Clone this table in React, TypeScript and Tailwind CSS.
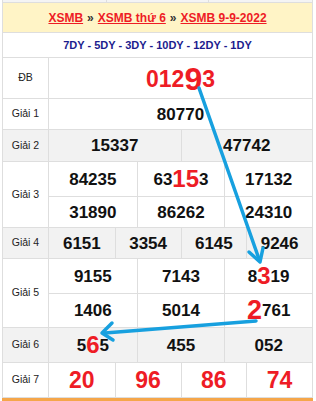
import React from 'react';

const RED = 'text-[#ee1c25]';

function Num({ children }: { children: React.ReactNode }) {
  return (
    <div className="flex items-center justify-center text-[17px] font-bold text-[#111] leading-none">
      {children}
    </div>
  );
}

function Big({ children, size = 'text-[24px]' }: { children: React.ReactNode; size?: string }) {
  return <span className={`${RED} ${size} font-bold leading-none`}>{children}</span>;
}

function Label({ children }: { children: React.ReactNode }) {
  return (
    <div className="w-[46px] shrink-0 border-r border-[#dedede] flex items-center justify-center text-[10.5px] text-[#222]">
      {children}
    </div>
  );
}

function Row({
  label,
  gray,
  h,
  children,
}: {
  label: string;
  gray?: boolean;
  h: string;
  children: React.ReactNode;
}) {
  return (
    <div className={`flex ${h} border-b border-[#dedede] ${gray ? 'bg-[#f2f2f2]' : 'bg-white'}`}>
      <Label>{label}</Label>
      <div className="flex-1 flex flex-col">{children}</div>
    </div>
  );
}

function Cells({ cols, items, h, last }: { cols: string; items: React.ReactNode[]; h: string; last?: boolean }) {
  return (
    <div className={`grid ${cols} ${h} ${last ? '' : 'border-b border-[#dedede]'}`}>
      {items.map((it, i) => (
        <div key={i} className={`flex items-center justify-center ${i > 0 ? 'border-l border-[#dedede]' : ''}`}>
          {it}
        </div>
      ))}
    </div>
  );
}

export default function App() {
  return (
    <div className="relative w-[316px] h-[401px] bg-white overflow-hidden" style={{ fontFamily: '"Liberation Sans", Arial, sans-serif' }}>
      <div className="ml-[2px] w-[311px] border-l border-r border-[#dedede]">
        {/* tail of previous table */}
        <div className="flex h-[3px] border-b border-[#dedede] bg-[#f4f4f4]">
          <div className="w-[104px] border-r border-[#dedede]" />
          <div className="w-[102px] border-r border-[#dedede]" />
          <div className="flex-1" />
        </div>

        <div className="h-[30px] border-b border-[#dedede] bg-[#fff4c6] flex items-center justify-center text-[12px] font-bold">
          <a className="text-[#ee1c25] underline">XSMB</a>
          <span className="mx-[4px] text-[#333]">»</span>
          <a className="text-[#ee1c25] underline">XSMB thứ 6</a>
          <span className="mx-[4px] text-[#333]">»</span>
          <a className="text-[#ee1c25] underline">XSMB 9-9-2022</a>
        </div>

        <div className="h-[25px] border-b border-[#dedede] bg-white flex items-center justify-center text-[11px] font-bold text-[#1c1c8e]">
          7DY - 5DY - 3DY - 10DY - 12DY - 1DY
        </div>

        <Row label="ĐB" h="h-[41px]">
          <div className="flex-1 flex items-center justify-center pt-[2px]">
            <span className={`${RED} text-[23px] font-bold leading-none`}>012</span>
            <Big size="text-[32px]">9</Big>
            <span className={`${RED} text-[23px] font-bold leading-none`}>3</span>
          </div>
        </Row>

        <Row label="Giải 1" h="h-[31px]">
          <div className="flex-1 flex items-center justify-center">
            <Num>80770</Num>
          </div>
        </Row>

        <Row label="Giải 2" gray h="h-[32px]">
          <Cells cols="grid-cols-2" h="h-full" last items={[<Num>15337</Num>, <Num>47742</Num>]} />
        </Row>

        <Row label="Giải 3" h="h-[66px]">
          <Cells
            cols="grid-cols-3"
            h="h-[35px]"
            items={[
              <Num>84235</Num>,
              <Num>
                63<Big>15</Big>3
              </Num>,
              <Num>17132</Num>,
            ]}
          />
          <Cells cols="grid-cols-3" h="flex-1" last items={[<Num>31890</Num>, <Num>86262</Num>, <Num>24310</Num>]} />
        </Row>

        <Row label="Giải 4" gray h="h-[31px]">
          <Cells
            cols="grid-cols-4"
            h="h-full"
            last
            items={[<Num>6151</Num>, <Num>3354</Num>, <Num>6145</Num>, <Num>9246</Num>]}
          />
        </Row>

        <Row label="Giải 5" h="h-[69px]">
          <Cells
            cols="grid-cols-3"
            h="h-[35px]"
            items={[
              <Num>9155</Num>,
              <Num>7143</Num>,
              <Num>
                8<Big>3</Big>19
              </Num>,
            ]}
          />
          <Cells
            cols="grid-cols-3"
            h="flex-1"
            last
            items={[
              <Num>1406</Num>,
              <Num>5014</Num>,
              <Num>
                <Big size="text-[27px]">2</Big>761
              </Num>,
            ]}
          />
        </Row>

        <Row label="Giải 6" gray h="h-[35px]">
          <Cells
            cols="grid-cols-3"
            h="h-full"
            last
            items={[
              <Num>
                5<Big>6</Big>5
              </Num>,
              <Num>455</Num>,
              <Num>052</Num>,
            ]}
          />
        </Row>

        <Row label="Giải 7" h="h-[35px]">
          <Cells
            cols="grid-cols-4"
            h="h-full"
            last
            items={['20', '96', '86', '74'].map((n) => (
              <Big size="text-[23px]">{n}</Big>
            ))}
          />
        </Row>
      </div>
      <div className="ml-[2px] w-[311px] h-[3px] bg-[#f5a64a]" />

      {/* arrows drawn over the table */}
      <svg className="absolute inset-0 pointer-events-none" width="316" height="401" viewBox="0 0 316 401">
        <g stroke="#17a0df" strokeWidth="3.5" strokeLinecap="round" fill="none">
          <line x1="199" y1="88" x2="259" y2="259" />
          <polyline points="249,252 260,262 263,248" strokeLinejoin="round" />
          <line x1="256" y1="321" x2="105" y2="333" />
          <polyline points="112,323 102,333 113,340" strokeLinejoin="round" />
        </g>
      </svg>
    </div>
  );
}
